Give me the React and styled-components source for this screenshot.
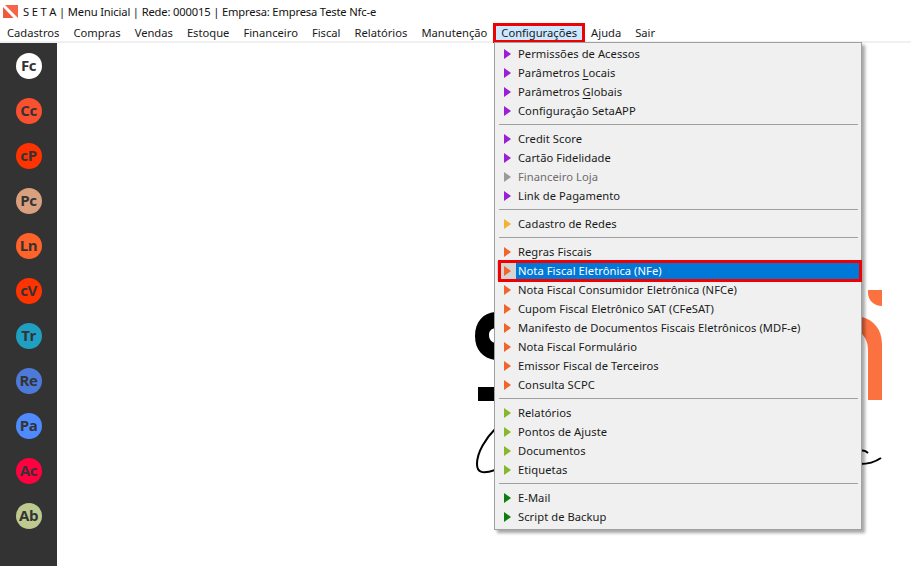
import React from 'react';
import styled, { createGlobalStyle } from 'styled-components';

const GlobalStyle = createGlobalStyle`
  html, body {
    margin: 0;
    padding: 0;
    height: 100%;
    overflow: hidden;
    background: #fff;
  }
  body {
    font-family: "Noto Sans", "Open Sans", sans-serif;
    font-size: 11.2px;
    color: #1a1a1a;
  }
`;

const Window = styled.div`
  width: 911px;
  height: 566px;
  display: flex;
  flex-direction: column;
  position: relative;
  overflow: hidden;
`;

const TitleBar = styled.div`
  height: 23px;
  display: flex;
  align-items: center;
  gap: 5px;
  padding-left: 3px;
  color: #111;
`;

const TitleText = styled.span`
  white-space: pre;
  letter-spacing: -0.16px;
`;

const MenuBar = styled.div`
  height: 18px;
  display: flex;
  border-bottom: 2px solid #f0f0f0;
`;

const MenuBarItem = styled.div`
  position: relative;
  padding: 0 7px;
  line-height: 20px;
  white-space: nowrap;
  background: ${p => (p.$active ? '#cce8ff' : 'transparent')};
`;

const Body = styled.div`
  flex: 1;
  display: flex;
  min-height: 0;
`;

const Sidebar = styled.div`
  width: 57px;
  background: #333333;
  display: flex;
  flex-direction: column;
  align-items: center;
  gap: 19px;
  padding-top: 10px;
  box-sizing: border-box;
`;

const Badge = styled.div`
  width: 26px;
  height: 26px;
  border-radius: 50%;
  background: ${p => p.$bg};
  color: #333;
  font: 700 15px/25px "Open Sans", sans-serif;
  letter-spacing: -0.4px;
  text-align: center;
`;

const Canvas = styled.div`
  flex: 1;
  position: relative;
`;

const Logo = styled.svg`
  position: absolute;
  left: 0;
  top: 0;
`;

const Dropdown = styled.div`
  position: absolute;
  left: 494px;
  top: 42px;
  width: 368px;
  box-sizing: border-box;
  padding: 1px 2px 3px;
  background: #f0f0f0;
  border: 1px solid #a0a0a0;
  box-shadow: 3px 3px 3px rgba(0, 0, 0, 0.35);
`;

const Row = styled.div`
  height: 19px;
  display: flex;
  align-items: center;
  color: ${p => (p.$disabled ? '#6d6d6d' : p.$active ? '#fff' : '#1a1a1a')};
`;

const Gutter = styled.div`
  width: 19px;
  height: 100%;
  flex: none;
  display: flex;
  align-items: center;
  padding-left: 7px;
  box-sizing: border-box;
  background: ${p => (p.$active ? '#d4d4d4' : 'transparent')};
`;

const Arrow = styled.div`
  width: 0;
  height: 0;
  border-style: solid;
  border-width: 5.5px 0 5.5px 7px;
  border-color: transparent transparent transparent ${p => p.$color};
`;

const Label = styled.div`
  flex: 1;
  height: 100%;
  line-height: 19px;
  padding-left: 2px;
  letter-spacing: 0.05px;
  white-space: nowrap;
  background: ${p => (p.$active ? '#0078d7' : 'transparent')};
`;

const Key = styled.span`
  text-decoration: underline;
  text-underline-offset: 2px;
`;

const Separator = styled.div`
  height: 1px;
  margin: 4px 1px 4px 2px;
  background: #a0a0a0;
`;

const RedBox = styled.div`
  position: absolute;
  border: 3px solid #f00000;
  pointer-events: none;
  box-sizing: border-box;
  left: ${p => p.$left};
  top: ${p => p.$top};
  right: ${p => p.$right};
  bottom: ${p => p.$bottom};
  height: ${p => p.$height || 'auto'};
`;

const menus = [
  'Cadastros', 'Compras', 'Vendas', 'Estoque', 'Financeiro', 'Fiscal',
  'Relatórios', 'Manutenção', 'Configurações', 'Ajuda', 'Sair',
];

const badges = [
  ['Fc', '#ffffff'],
  ['Cc', '#f9502f'],
  ['cP', '#ff3300'],
  ['Pc', '#d9a080'],
  ['Ln', '#ff6329'],
  ['cV', '#ff3300'],
  ['Tr', '#1f9fc1'],
  ['Re', '#4d7ad9'],
  ['Pa', '#4f8aff'],
  ['Ac', '#ff0040'],
  ['Ab', '#bdc98f'],
];

const PURPLE = '#9a1fd6';
const AMBER = '#f2b233';
const ORANGE = '#f2642c';
const LIME = '#86b82b';
const GREEN = '#0e7f0e';

const groups = [
  [
    { text: 'Permissões de Acessos', color: PURPLE },
    { text: <>Parâmetros <Key>L</Key>ocais</>, color: PURPLE },
    { text: <>Parâmetros <Key>G</Key>lobais</>, color: PURPLE },
    { text: 'Configuração SetaAPP', color: PURPLE },
  ],
  [
    { text: 'Credit Score', color: PURPLE },
    { text: 'Cartão Fidelidade', color: PURPLE },
    { text: 'Financeiro Loja', color: '#9a9a9a', disabled: true },
    { text: 'Link de Pagamento', color: PURPLE },
  ],
  [{ text: 'Cadastro de Redes', color: AMBER }],
  [
    { text: 'Regras Fiscais', color: ORANGE },
    { text: 'Nota Fiscal Eletrônica (NFe)', color: ORANGE, active: true },
    { text: 'Nota Fiscal Consumidor Eletrônica (NFCe)', color: ORANGE },
    { text: 'Cupom Fiscal Eletrônico SAT (CFeSAT)', color: ORANGE },
    { text: 'Manifesto de Documentos Fiscais Eletrônicos (MDF-e)', color: ORANGE },
    { text: 'Nota Fiscal Formulário', color: ORANGE },
    { text: 'Emissor Fiscal de Terceiros', color: ORANGE },
    { text: 'Consulta SCPC', color: ORANGE },
  ],
  [
    { text: 'Relatórios', color: LIME },
    { text: 'Pontos de Ajuste', color: LIME },
    { text: 'Documentos', color: LIME },
    { text: 'Etiquetas', color: LIME },
  ],
  [
    { text: 'E-Mail', color: GREEN },
    { text: 'Script de Backup', color: GREEN },
  ],
];

const AppIcon = () => (
  <svg width="15" height="13" viewBox="0 0 15 13">
    <path d="M2 0h13v13z" fill="#f4654a" />
    <path d="M0 2l10.5 11H0z" fill="#ee5a3e" />
  </svg>
);

export default function App() {
  return (
    <>
      <GlobalStyle />
      <Window>
        <TitleBar>
          <AppIcon />
          <TitleText>S E T A | Menu Inicial | Rede: 000015 | Empresa: Empresa Teste Nfc-e</TitleText>
        </TitleBar>
        <MenuBar>
          {menus.map(name => (
            <MenuBarItem key={name} $active={name === 'Configurações'}>
              {name}
              {name === 'Configurações' && (
                <RedBox $left="-1px" $top="0" $right="-1px" $bottom="-2px" />
              )}
            </MenuBarItem>
          ))}
        </MenuBar>
        <Body>
          <Sidebar>
            {badges.map(([label, bg]) => (
              <Badge key={label} $bg={bg}>{label}</Badge>
            ))}
          </Sidebar>
          <Canvas>
            <Logo width="854" height="525" viewBox="57 41 854 525">
              <path d="M495 310c-12 1-20 10-20 24 0 14 8 22 20 24v-17c-4-1-6-4-6-8 0-4 2-6 6-7z" fill="#000" />
              <rect x="478" y="385" width="18" height="14" fill="#000" />
              <path d="M496 426c-10 10-19 24-19 36 0 9 6 10 18 6" fill="none" stroke="#000" strokeWidth="2" />
              <path d="M868 288h14v16c-8 0-14-6-14-13z" fill="#fb7140" />
              <path d="M862 315c12 3 20 13 20 27v56h-14v-50c0-8-3-13-6-16z" fill="#fb7140" />
              <path d="M860 449c3-1 6 0 8 2M860 462c8 0 15-2 21-6" fill="none" stroke="#000" strokeWidth="2" />
            </Logo>
          </Canvas>
        </Body>
        <Dropdown>
          {groups.map((items, i) => (
            <React.Fragment key={i}>
              {i > 0 && <Separator />}
              {items.map((item, j) => (
                <Row key={j} $active={item.active} $disabled={item.disabled}>
                  <Gutter $active={item.active}>
                    <Arrow $color={item.color} />
                  </Gutter>
                  <Label $active={item.active}>{item.text}</Label>
                </Row>
              ))}
            </React.Fragment>
          ))}
          <RedBox $left="3px" $top="217px" $right="-1px" $bottom="auto" $height="22px" />
        </Dropdown>
      </Window>
    </>
  );
}
